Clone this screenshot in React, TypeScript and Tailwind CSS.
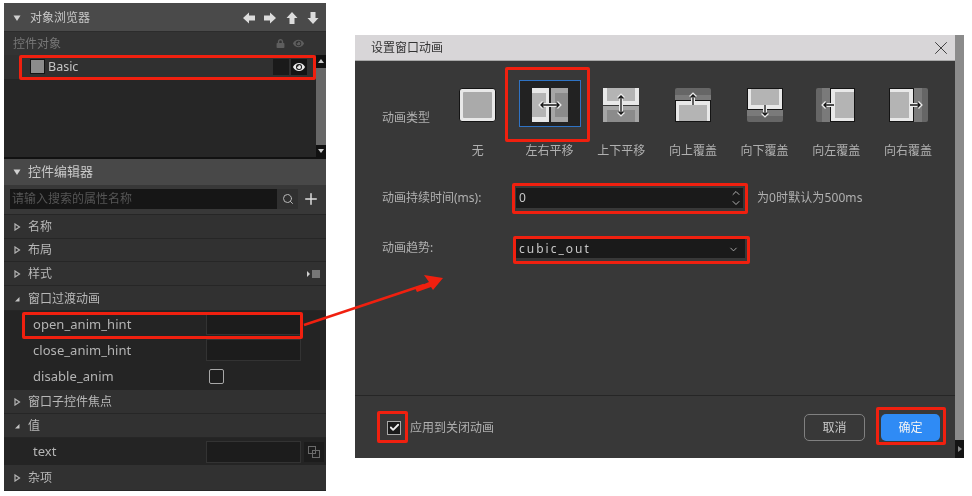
import type { ReactNode } from "react"
import { Check, ChevronDown, ChevronUp, Plus, Search, X } from "lucide-react"
import { FaEye, FaLock } from "react-icons/fa"

const font = "font-['Noto_Sans','Noto_Sans_CJK_SC',sans-serif]"

function Caret({ kind }: { kind: "open" | "closed" | "down" }) {
  if (kind === "down") {
    return (
      <svg width="8" height="8" viewBox="0 0 8 8">
        <path d="M0.5 1.5H7.5L4 7Z" fill="#d0d0d0" />
      </svg>
    )
  }
  if (kind === "open") {
    return (
      <svg width="8" height="8" viewBox="0 0 8 8">
        <path d="M6.5 2V6.5H2Z" fill="#c4c4c4" />
      </svg>
    )
  }
  return (
    <svg width="8" height="8" viewBox="0 0 8 8">
      <path d="M2 1L6.5 4L2 7Z" fill="none" stroke="#b4b4b4" strokeWidth="1.2" />
    </svg>
  )
}

function BlockArrow({ angle }: { angle: number }) {
  return (
    <svg width="12" height="12" viewBox="0 0 12 12" style={{ transform: `rotate(${angle}deg)` }}>
      <path d="M0 6L6 0.5V3.5H12V8.5H6V11.5Z" fill="#dcdcdc" />
    </svg>
  )
}

function GroupRow({
  label,
  open,
  extra,
  h = "h-6",
}: {
  label: string
  open?: boolean
  extra?: ReactNode
  h?: string
}) {
  return (
    <div className={`flex items-center justify-between border-b border-[#262626] bg-[#313131] pt-[1px] pr-[5px] pl-[9px] ${h}`}>
      <div className="flex items-center gap-[7px] text-[12px] text-[#b8b8b8]">
        <Caret kind={open ? "open" : "closed"} />
        {label}
      </div>
      {extra}
    </div>
  )
}

function PropRow({ name, children, h }: { name: string; children?: ReactNode; h: string }) {
  return (
    <div className={`flex items-center bg-[#242424] pl-[29px] ${h}`}>
      <div className="w-[173px] text-[13px] tracking-[0.05px] text-[#b4b4b4]">{name}</div>
      {children}
    </div>
  )
}

function ValueBox() {
  return <div className="h-[22px] w-[95px] border border-[#333333] bg-[#1c1c1c]" />
}

function LeftPanel() {
  return (
    <div className="mt-[3px] ml-1 flex h-[488px] w-[322px] flex-col bg-[#242424]">
      <div className="flex h-[29px] items-center justify-between border-b border-[#2c2c2c] bg-[#4a4a4a] pt-[2px] pr-[7px] pl-[9px]">
        <div className="flex items-center gap-[9px] text-[12px] text-[#c8c8c8]">
          <Caret kind="down" />
          对象浏览器
        </div>
        <div className="flex items-center gap-[9.5px]">
          <BlockArrow angle={0} />
          <BlockArrow angle={180} />
          <BlockArrow angle={90} />
          <BlockArrow angle={270} />
        </div>
      </div>
      <div className="flex h-[23px] items-center justify-between bg-[#333333] pt-[1px] pr-[22px] pl-[9px]">
        <span className="text-[12px] text-[#777777]">控件对象</span>
        <div className="flex items-center gap-[8px] text-[#5e5e5e]">
          <FaLock size={9} />
          <FaEye size={11} />
        </div>
      </div>
      <div className="flex h-[104px] border-b-2 border-[#111111]">
        <div className="min-w-0 flex-1 bg-[#262626]">
          <div className="flex h-[24px] items-center bg-[#303030] pr-[9px] pl-[26px]">
            <div className="h-[15px] w-[15px] border border-[#141414] bg-[#8c8c8c]" />
            <span className="ml-[3px] text-[12.5px] text-[#c4c4c4]">Basic</span>
            <div className="ml-auto h-4 w-4 bg-[#1a1a1a]" />
            <div className="ml-[2px] flex h-4 w-4 items-center justify-center bg-[#141414] text-[#e8e8e8]">
              <FaEye size={12} />
            </div>
          </div>
        </div>
        <div className="flex w-[10px] flex-col">
          <div className="flex h-[13px] items-center justify-center bg-[#111111]">
            <svg width="6" height="4" viewBox="0 0 6 4">
              <path d="M3 0L6 4H0Z" fill="#cccccc" />
            </svg>
          </div>
          <div className="flex-1 bg-[#676767]" />
          <div className="flex h-[12px] items-center justify-center bg-[#111111]">
            <svg width="6" height="4" viewBox="0 0 6 4">
              <path d="M0 0H6L3 4Z" fill="#cccccc" />
            </svg>
          </div>
        </div>
      </div>
      <div className="flex h-[26px] items-center gap-[7px] bg-[#484848] pl-[9px] text-[13px] text-[#c8c8c8]">
        <Caret kind="down" />
        控件编辑器
      </div>
      <div className="flex h-[30px] items-center border-b border-[#262626] bg-[#383838] pl-[6px]">
        <div className="flex h-5 w-[267px] items-center bg-[#161616] pl-[2px] text-[12px] text-[#555555]">
          请输入搜索的属性名称
        </div>
        <div className="flex h-5 w-[21px] items-center justify-center bg-[#303030] text-[#b8b8b8]">
          <Search size={12} strokeWidth={2} />
        </div>
        <Plus size={18} strokeWidth={2} className="ml-[4px] text-[#dddddd]" />
      </div>
      <GroupRow label="名称" />
      <GroupRow label="布局" />
      <GroupRow
        label="样式"
        extra={
          <svg width="14" height="8" viewBox="0 0 14 8">
            <path d="M0 1L3 4L0 7Z" fill="#cfcfcf" />
            <rect x="5" y="0" width="8" height="8" fill="#777777" />
          </svg>
        }
      />
      <GroupRow label="窗口过渡动画" open h="h-[25px]" />
      <PropRow name="open_anim_hint" h="h-[26px]">
        <ValueBox />
      </PropRow>
      <PropRow name="close_anim_hint" h="h-[26px]">
        <ValueBox />
      </PropRow>
      <PropRow name="disable_anim" h="h-[27px]">
        <div className="ml-[3px] h-[15px] w-[15px] rounded-[2px] border border-[#a8a8a8] bg-[#1e1e1e]" />
      </PropRow>
      <GroupRow label="窗口子控件焦点" />
      <GroupRow label="值" open />
      <PropRow name="text" h="h-[27px]">
        <ValueBox />
        <div className="ml-[3px] flex h-5 w-5 items-center justify-center bg-[#1c1c1c]">
          <svg width="12" height="12" viewBox="0 0 12 12" fill="none" stroke="#6a6a6a">
            <rect x="0.5" y="0.5" width="7" height="7" />
            <rect x="4.5" y="4.5" width="7" height="7" />
          </svg>
        </div>
      </PropRow>
      <GroupRow label="杂项" h="h-[26px]" />
    </div>
  )
}

const white = "#e8e8e8"
const grey = "#a6a6a6"
const dark = "#7a7a7a"

function Arrow({ d }: { d: string }) {
  return (
    <>
      <path d={d} stroke="#ececec" strokeWidth="4" fill="none" />
      <path d={d} stroke="#161616" strokeWidth="1.3" fill="none" />
    </>
  )
}

function AnimIcon({ type }: { type: string }) {
  return (
    <svg width="44" height="38" viewBox="0 0 44 38">
      {type === "none" && (
        <>
          <rect x="3.5" y="2.5" width="36" height="33" rx="2.5" fill={white} stroke="#141414" />
          <rect x="7" y="6" width="29" height="26" rx="1" fill="#aaaaaa" />
        </>
      )}
      {type === "lr" && (
        <>
          <rect x="4" y="2" width="17" height="34" fill={white} />
          <rect x="4" y="7" width="14" height="24" fill="#b4b4b4" />
          <rect x="23" y="2" width="17" height="34" fill={grey} />
          <rect x="27" y="7" width="13" height="24" fill={dark} opacity="0.6" />
          <Arrow d="M13 19H31M15.5 16.5L13 19L15.5 21.5M28.5 16.5L31 19L28.5 21.5" />
        </>
      )}
      {type === "ud" && (
        <>
          <rect x="4" y="2" width="36" height="17" fill={white} />
          <rect x="8" y="2" width="28" height="13" fill="#b4b4b4" />
          <rect x="4" y="20" width="36" height="16" fill={grey} />
          <rect x="8" y="24" width="28" height="12" fill={dark} opacity="0.6" />
          <Arrow d="M22 10V28M19.5 12.5L22 10L24.5 12.5M19.5 25.5L22 28L24.5 25.5" />
        </>
      )}
      {type === "up" && (
        <>
          <rect x="4" y="2" width="36" height="20" rx="2" fill="#666666" />
          <rect x="4" y="9" width="36" height="8" fill={dark} />
          <rect x="4.5" y="14.5" width="35" height="21" fill={white} stroke="#141414" />
          <rect x="8" y="19" width="28" height="16" fill="#b4b4b4" />
          <Arrow d="M22 19V9M19.5 11.5L22 9L24.5 11.5" />
        </>
      )}
      {type === "down" && (
        <>
          <rect x="4" y="16" width="36" height="20" rx="2" fill="#666666" />
          <rect x="4" y="22" width="36" height="8" fill={dark} />
          <rect x="4.5" y="2.5" width="35" height="21" fill={white} stroke="#141414" />
          <rect x="8" y="3" width="28" height="16" fill="#b4b4b4" />
          <Arrow d="M22 19V29M19.5 26.5L22 29L24.5 26.5" />
        </>
      )}
      {type === "left" && (
        <>
          <rect x="2" y="2" width="20" height="34" rx="2" fill="#666666" />
          <rect x="8" y="2" width="8" height="34" fill={dark} />
          <rect x="16.5" y="2.5" width="24" height="33" fill={white} stroke="#141414" />
          <rect x="21" y="6" width="19" height="26" fill="#b4b4b4" />
          <Arrow d="M20 19H10M12.5 16.5L10 19L12.5 21.5" />
        </>
      )}
      {type === "right" && (
        <>
          <rect x="22" y="2" width="20" height="34" rx="2" fill="#666666" />
          <rect x="28" y="2" width="8" height="34" fill={dark} />
          <rect x="3.5" y="2.5" width="24" height="33" fill={white} stroke="#141414" />
          <rect x="4" y="6" width="19" height="26" fill="#b4b4b4" />
          <Arrow d="M24 19H34M31.5 16.5L34 19L31.5 21.5" />
        </>
      )}
    </svg>
  )
}

const animTypes = [
  { type: "none", label: "无" },
  { type: "lr", label: "左右平移" },
  { type: "ud", label: "上下平移" },
  { type: "up", label: "向上覆盖" },
  { type: "down", label: "向下覆盖" },
  { type: "left", label: "向左覆盖" },
  { type: "right", label: "向右覆盖" },
]

function Dialog() {
  return (
    <div className="mt-[35px] ml-[29px] flex h-[423px] w-[609px]">
      <div className="flex w-[600px] flex-col">
        <div className="flex h-[26px] items-center justify-between border-b border-[#a8a8a8] bg-[#d8d6d8] pr-[3px] pl-4 text-[12px] text-[#333333]">
          设置窗口动画
          <X size={22} strokeWidth={0.9} className="text-[#222222]" />
        </div>
        <div className="flex flex-1 flex-col bg-[#383838] pl-[27px] text-[12px] text-[#b0b0b0]">
          <div className="flex pt-[19px]">
            <div className="flex h-[47px] w-[60px] items-center pt-[28px]">动画类型</div>
            <div className="flex">
              {animTypes.map((item) => (
                <div key={item.type} className="flex w-[71.7px] flex-col items-center">
                  <div
                    className={`flex h-[47px] w-[62px] items-center justify-center pt-[3px] ${
                      item.type === "lr" ? "border border-[#2f73c4] bg-[#222222]" : ""
                    }`}
                  >
                    <AnimIcon type={item.type} />
                  </div>
                  <div className="mt-[15px] text-[12px] leading-[18px]">{item.label}</div>
                </div>
              ))}
            </div>
          </div>
          <div className="mt-[28px] flex h-5 items-center">
            <div className="w-[134px]">动画持续时间(ms):</div>
            <div className="flex h-5 w-[227px] items-center justify-between bg-[#1a1a1a] pr-[1px] pl-[3px] text-[12px] text-[#c8c8c8]">
              0
              <div className="flex flex-col text-[#b0b0b0]">
                <ChevronUp size={12} className="-mb-[2px]" />
                <ChevronDown size={12} />
              </div>
            </div>
            <span className="ml-[14px] tracking-[0.1px]">为0时默认为500ms</span>
          </div>
          <div className="mt-[30px] flex h-5 items-center">
            <div className="w-[134px]">动画趋势:</div>
            <div className="flex h-5 w-[229px] items-center justify-between bg-[#1a1a1a] pt-[2px] pr-[6px] pl-[3px] text-[12px] tracking-[2px] text-[#c8c8c8]">
              cubic_out
              <ChevronDown size={11} className="text-[#b0b0b0]" />
            </div>
          </div>
          <div className="flex-1" />
          <div className="-ml-[27px] flex h-[63px] items-center justify-between border-t border-[#262626] pt-[1px] pr-[15px] pl-[32px]">
            <div className="flex items-center gap-[9px]">
              <div className="flex h-[14px] w-[14px] items-center justify-center border border-[#a8a8a8] bg-[#1a1a1a] text-[#eeeeee]">
                <Check size={11} strokeWidth={4} />
              </div>
              应用到关闭动画
            </div>
            <div className="flex items-center gap-4">
              <div className="flex h-[27px] w-[61px] items-center justify-center rounded-[5px] border border-[#808080] text-[#c8c8c8]">
                取消
              </div>
              <div className="flex h-[27px] w-[59px] items-center justify-center rounded-[5px] bg-[#2f8bf5] text-[#f4f4f4]">
                确定
              </div>
            </div>
          </div>
        </div>
      </div>
      <div className="flex w-[9px] flex-col">
        <div className="flex-1 bg-[#8b8b8b]" />
        <div className="flex h-[18px] items-center justify-center bg-[#141414]">
          <svg width="4" height="6" viewBox="0 0 4 6">
            <path d="M0 0L4 3L0 6Z" fill="#888888" />
          </svg>
        </div>
      </div>
    </div>
  )
}

// red annotations drawn over the two screenshots
const highlights = [
  "left-[19px] top-[55px] h-[25px] w-[297px]",
  "left-[22px] top-[312px] h-[27px] w-[281px]",
  "left-[505px] top-[67px] h-[75px] w-[85px]",
  "left-[512px] top-[183px] h-[31px] w-[236px]",
  "left-[513px] top-[236px] h-[28px] w-[237px]",
  "left-[377px] top-[411px] h-[32px] w-[31px]",
  "left-[876px] top-[407px] h-[38px] w-[70px]",
]

export default function App() {
  return (
    <div className={`relative flex h-[496px] w-[972px] items-start overflow-hidden bg-white blur-[0.4px] ${font}`}>
      <LeftPanel />
      <Dialog />
      {highlights.map((box) => (
        <div key={box} className={`absolute rounded-[2px] border-[3px] border-[#f0200f] ${box}`} />
      ))}
      <svg className="absolute top-0 left-0" width="972" height="496" viewBox="0 0 972 496">
        <path d="M304 325L424 285" stroke="#f0200f" strokeWidth="2.5" fill="none" />
        <path d="M443 278L424 275L429 282L415 288L417 292L431 287L433 290Z" fill="#f0200f" />
      </svg>
    </div>
  )
}
